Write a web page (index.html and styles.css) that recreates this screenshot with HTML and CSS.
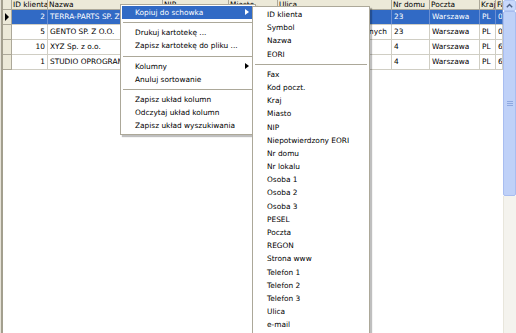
FILE: index.html
```html
<!DOCTYPE html>
<html lang="pl">
<head>
  <meta charset="UTF-8">
  <title>Kontrahenci</title>
  <link rel="stylesheet" href="styles.css">
</head>
<body>
<div id="window">
  <div class="grid">
    <div class="row head">
      <div class="cell ind"></div>
      <div class="cell">ID klienta</div>
      <div class="cell">Nazwa</div>
      <div class="cell">NIP</div>
      <div class="cell">Miasto</div>
      <div class="cell">Ulica</div>
      <div class="cell">Nr domu</div>
      <div class="cell">Poczta</div>
      <div class="cell">Kraj</div>
      <div class="cell">Fax</div>
    </div>
    <div class="row sel">
      <div class="cell ind"><span class="arrow"></span></div>
      <div class="cell num">2</div>
      <div class="cell">TERRA-PARTS SP. Z O.O.</div>
      <div class="cell">5260012345</div>
      <div class="cell">Warszawa</div>
      <div class="cell">Grójecka</div>
      <div class="cell">23</div>
      <div class="cell">Warszawa</div>
      <div class="cell">PL</div>
      <div class="cell">022 658 12 00</div>
    </div>
    <div class="row">
      <div class="cell ind"></div>
      <div class="cell num">5</div>
      <div class="cell">GENTO SP. Z O.O.</div>
      <div class="cell">5213344556</div>
      <div class="cell">Warszawa</div>
      <div class="cell">ul. Pl. Żołnierzy Niezłomnych</div>
      <div class="cell">23</div>
      <div class="cell">Warszawa</div>
      <div class="cell">PL</div>
      <div class="cell">022 811 40 40</div>
    </div>
    <div class="row">
      <div class="cell ind"></div>
      <div class="cell num">10</div>
      <div class="cell">XYZ Sp. z o.o.</div>
      <div class="cell">1130987654</div>
      <div class="cell">Warszawa</div>
      <div class="cell">Prosta</div>
      <div class="cell">4</div>
      <div class="cell">Warszawa</div>
      <div class="cell">PL</div>
      <div class="cell">601 222 333</div>
    </div>
    <div class="row">
      <div class="cell ind"></div>
      <div class="cell num">1</div>
      <div class="cell">STUDIO OPROGRAMOWANIA</div>
      <div class="cell">9512233445</div>
      <div class="cell">Warszawa</div>
      <div class="cell">Prosta</div>
      <div class="cell">4</div>
      <div class="cell">Warszawa</div>
      <div class="cell">PL</div>
      <div class="cell">605 100 200</div>
    </div>
  </div>

  <div class="scrollbar">
    <div class="scroll-btn">
      <svg width="7" height="5" viewBox="0 0 7 5"><path d="M0.8 4.2 L3.5 1.4 L6.2 4.2" fill="none" stroke="#4d6185" stroke-width="1.4"/></svg>
    </div>
    <div class="thumb">
      <svg width="6" height="7" viewBox="0 0 6 7"><path d="M0 1.5h6M0 3.5h6M0 5.5h6" stroke="#8ea8e0" stroke-width="1"/></svg>
    </div>
    <div class="track"></div>
  </div>

  <div class="menu main-menu">
    <div class="item active">Kopiuj do schowka<span class="sub"></span></div>
    <div class="sep"></div>
    <div class="item">Drukuj kartotekę ...</div>
    <div class="item">Zapisz kartotekę do pliku ...</div>
    <div class="sep"></div>
    <div class="item">Kolumny<span class="sub"></span></div>
    <div class="item">Anuluj sortowanie</div>
    <div class="sep"></div>
    <div class="item">Zapisz układ kolumn</div>
    <div class="item">Odczytaj układ kolumn</div>
    <div class="item">Zapisz układ wyszukiwania</div>
  </div>

  <div class="menu sub-menu">
    <div class="item">ID klienta</div>
    <div class="item">Symbol</div>
    <div class="item">Nazwa</div>
    <div class="item">EORI</div>
    <div class="sep"></div>
    <div class="item">Fax</div>
    <div class="item">Kod poczt.</div>
    <div class="item">Kraj</div>
    <div class="item">Miasto</div>
    <div class="item">NIP</div>
    <div class="item">Niepotwierdzony EORI</div>
    <div class="item">Nr domu</div>
    <div class="item">Nr lokalu</div>
    <div class="item">Osoba 1</div>
    <div class="item">Osoba 2</div>
    <div class="item">Osoba 3</div>
    <div class="item">PESEL</div>
    <div class="item">Poczta</div>
    <div class="item">REGON</div>
    <div class="item">Strona www</div>
    <div class="item">Telefon 1</div>
    <div class="item">Telefon 2</div>
    <div class="item">Telefon 3</div>
    <div class="item">Ulica</div>
    <div class="item">e-mail</div>
  </div>
</div>
</body>
</html>
```

FILE: styles.css
```css
body {
    margin: 0;
    padding: 0;
    font-family: "DejaVu Sans", Verdana, sans-serif;
    font-size: 7.4px;
    color: #000;
    background-color: #fff;
    overflow: hidden;
}

#window {
    position: relative;
    width: 516px;
    height: 333px;
    display: flex;
    overflow: hidden;
    background-color: #fff;
}

/* Siatka danych */
.grid {
    flex: 1;
    border-left: 1px solid #e6e3d8;
    box-shadow: inset 2px 0 0 #a39f8e;
    padding-left: 2px;
}

.row {
    display: grid;
    grid-template-columns: 9px 36px 115px 66px 49px 114px 38px 50px 16px 7px;
    height: 15px;
}

.cell {
    box-sizing: border-box;
    border-right: 1px solid #d0cec4;
    border-bottom: 1px solid #d0cec4;
    padding: 0 2px;
    line-height: 14px;
    white-space: nowrap;
    overflow: hidden;
}

.cell.num {
    text-align: right;
}

.cell.ind {
    background-color: #ece9d8;
    border-color: #aca899;
    padding: 0;
    display: flex;
    align-items: center;
    justify-content: center;
}

.head {
    height: 10px;
}

.head .cell {
    background-color: #ece9d8;
    border-color: #aca899;
    line-height: 9px;
    padding: 0 1px;
}

.sel .cell {
    background-color: #316ac5;
    color: #fff;
    border-right-color: #6b8fd3;
}

.sel .cell.ind {
    background-color: #ece9d8;
    border-color: #aca899;
}

.arrow {
    width: 0;
    height: 0;
    border-left: 4px solid #000;
    border-top: 4px solid transparent;
    border-bottom: 4px solid transparent;
}

/* Pasek przewijania */
.scrollbar {
    width: 13px;
    display: flex;
    flex-direction: column;
}

.scroll-btn {
    height: 11px;
    box-sizing: border-box;
    background-color: #c8d8fb;
    border: 1px solid #b4c8f4;
    border-radius: 2px;
    display: flex;
    align-items: center;
    justify-content: center;
}

.thumb {
    height: 185px;
    box-sizing: border-box;
    background-color: #bfd1f8;
    border: 1px solid #a8bdf0;
    border-radius: 2px;
    display: flex;
    align-items: center;
    justify-content: center;
}

.track {
    flex: 1;
    background-color: #f4f3ee;
    border-left: 1px solid #e8e6dc;
}

/* Menu kontekstowe */
.menu {
    position: absolute;
    background-color: #fff;
    border: 1px solid #aca899;
    padding: 1px;
    box-shadow: 2px 2px 1px rgba(0, 0, 0, 0.25);
}

.main-menu {
    left: 120px;
    top: 4px;
    width: 132px;
}

.sub-menu {
    left: 252px;
    top: 6px;
    width: 114px;
    height: 400px;
}

.item {
    position: relative;
    height: 13.2px;
    line-height: 13.2px;
    padding-left: 13px;
    white-space: nowrap;
}

.item.active {
    background-color: #316ac5;
    color: #fff;
}

.sep {
    height: 7px;
    display: flex;
    align-items: center;
    padding: 0 1px;
}

.sep::before {
    content: "";
    flex: 1;
    border-top: 1px solid #aca899;
}

.sub {
    position: absolute;
    right: 5px;
    top: 3px;
    width: 0;
    height: 0;
    border-left: 4px solid #000;
    border-top: 3.5px solid transparent;
    border-bottom: 3.5px solid transparent;
}

.item.active .sub {
    border-left-color: #fff;
}
```
